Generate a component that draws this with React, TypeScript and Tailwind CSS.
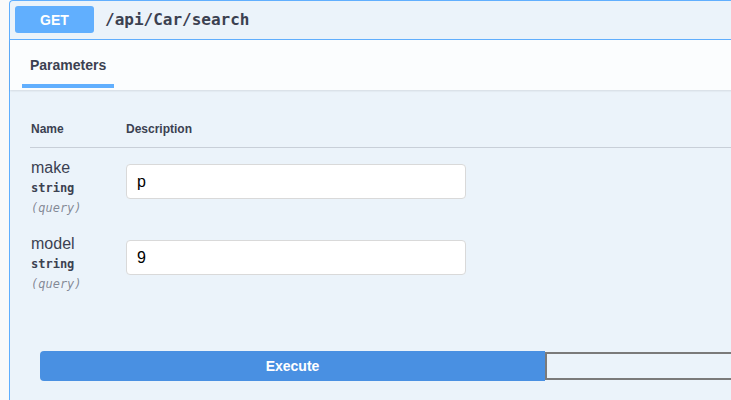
import React from 'react';

const sans = { fontFamily: '"Liberation Sans", Arial, sans-serif' };
const mono = { fontFamily: '"DejaVu Sans Mono", "Liberation Mono", monospace' };

type Param = { name: string; type: string; location: string; value: string };

const params: Param[] = [
  { name: 'make', type: 'string', location: '(query)', value: 'p' },
  { name: 'model', type: 'string', location: '(query)', value: '9' },
];

const ParamRow: React.FC<{ param: Param }> = ({ param }) => (
  <div className="flex">
    <div className="w-[96px] shrink-0 pl-px text-[#3b4151]">
      <div className="text-base leading-5" style={sans}>{param.name}</div>
      <div className="text-xs font-bold leading-5" style={mono}>{param.type}</div>
      <div className="text-xs italic leading-5 text-[#3b4151]/60" style={mono}>{param.location}</div>
    </div>
    <div className="pt-[6px]">
      <input
        readOnly
        value={param.value}
        className="h-[35px] w-[340px] rounded border border-[#d9d9d9] bg-white px-[10px] text-base text-black outline-none"
        style={sans}
      />
    </div>
  </div>
);

export default function App() {
  return (
    <div className="h-[400px] w-[731px] overflow-hidden bg-[#fafafa] pl-[9px]" style={sans}>
      <div className="h-full w-[1100px] rounded-tl border-l border-t border-[#61affe] bg-[#ebf3fa]">
        {/* summary */}
        <div className="flex items-center gap-[11px] border-b border-[#61affe] pb-[6px] pl-[5px] pt-[5px]">
          <span className="flex h-[27px] w-[79px] items-center justify-center rounded-[3px] bg-[#61affe] text-sm font-bold text-white">
            GET
          </span>
          <span className="text-base font-semibold text-[#3b4151]" style={mono}>/api/Car/search</span>
        </div>

        {/* tab header */}
        <div className="flex bg-[#fbfdfe] pb-[2px] pl-[12px] pt-[15px] shadow-[0_1px_2px_rgba(0,0,0,0.1)]">
          <div className="border-b-4 border-[#61affe] px-[8px] pb-[9px] text-sm font-bold leading-5 text-[#3b4151]">
            Parameters
          </div>
        </div>

        {/* parameters table */}
        <div className="pl-[20px] pt-[31px]">
          <div className="flex border-b border-[rgba(59,65,81,0.2)] pb-[10px] text-xs font-bold leading-4 text-[#3b4151]">
            <div className="w-[96px] pl-px">Name</div>
            <div>Description</div>
          </div>
          <div className="flex flex-col gap-4 pt-[10px]">
            {params.map((p) => (
              <ParamRow key={p.name} param={p} />
            ))}
          </div>
        </div>

        {/* execute */}
        <div className="flex pl-[30px] pt-[57px]">
          <button className="h-[30px] w-[505px] rounded-l bg-[#4990e2] text-sm font-bold text-white">
            Execute
          </button>
          <div className="mt-px h-[28px] w-[505px] border-2 border-[#7a7a7a]" />
        </div>
      </div>
    </div>
  );
}
